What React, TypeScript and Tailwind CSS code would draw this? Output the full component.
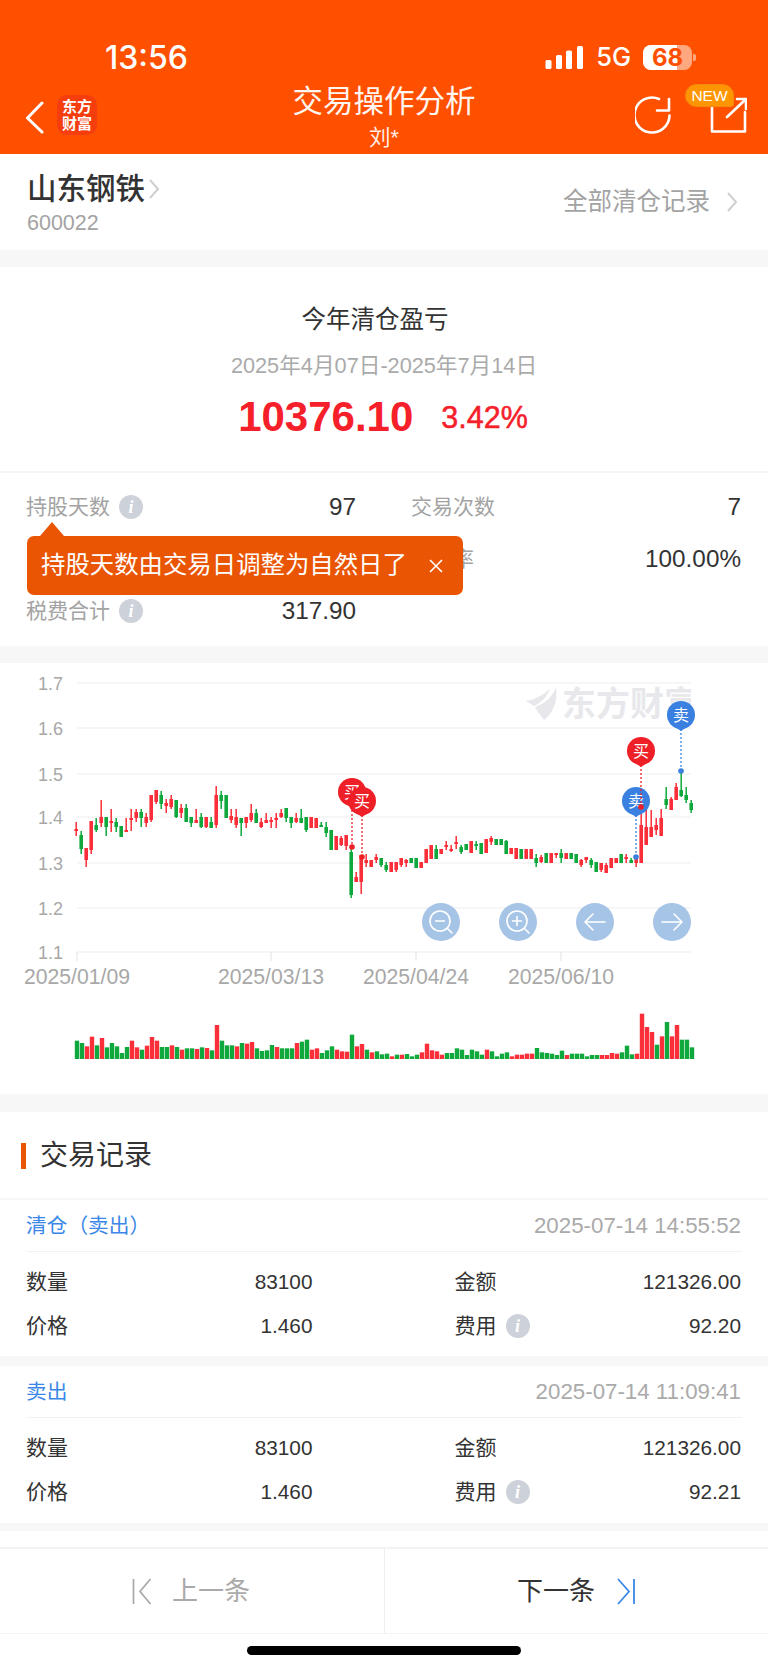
import type { ReactNode } from "react";

type Candle = [number, number, number, number, "r" | "g"];

// [high, low, body top, body bottom, colour], y in page pixels
const candles: Candle[] = [
  [822, 836, 829, 831, "r"], [831, 854, 835, 849, "g"], [848, 867, 848, 860, "r"], [821, 854, 821, 850, "r"],
  [818, 832, 825, 830, "g"], [800, 827, 817, 823, "r"], [817, 836, 817, 827, "g"], [809, 832, 821, 823, "r"],
  [818, 832, 822, 827, "g"], [826, 837, 826, 837, "g"], [818, 832, 830, 832, "r"], [809, 831, 818, 820, "r"],
  [809, 822, 812, 818, "r"], [809, 827, 812, 818, "g"], [813, 827, 817, 823, "r"], [795, 822, 795, 820, "r"],
  [790, 804, 790, 802, "r"], [791, 809, 795, 804, "g"], [799, 813, 803, 806, "r"], [795, 809, 799, 807, "r"],
  [800, 818, 800, 817, "g"], [804, 818, 808, 813, "r"], [804, 822, 808, 822, "g"], [817, 827, 817, 823, "g"],
  [809, 823, 820, 823, "r"], [813, 828, 817, 827, "g"], [817, 828, 817, 827, "r"], [817, 828, 822, 828, "g"],
  [786, 828, 795, 825, "r"], [791, 809, 795, 801, "g"], [795, 818, 795, 818, "g"], [809, 823, 816, 820, "r"],
  [809, 828, 817, 825, "r"], [818, 836, 818, 823, "g"], [817, 828, 817, 823, "r"], [804, 822, 813, 820, "r"],
  [809, 823, 813, 823, "g"], [818, 828, 822, 827, "r"], [813, 823, 820, 823, "r"], [817, 828, 820, 822, "r"],
  [813, 828, 818, 820, "r"], [809, 818, 813, 817, "r"], [808, 822, 808, 818, "g"], [817, 828, 817, 823, "g"],
  [813, 823, 818, 822, "r"], [809, 823, 818, 823, "g"], [817, 832, 817, 830, "g"], [817, 828, 817, 828, "r"],
  [818, 828, 818, 828, "r"], [822, 827, 825, 827, "g"], [822, 837, 827, 833, "g"], [830, 850, 830, 850, "g"],
  [836, 850, 836, 850, "r"], [836, 846, 838, 845, "r"], [835, 850, 835, 846, "r"], [847, 898, 852, 895, "g"],
  [872, 882, 877, 882, "r"], [855, 894, 855, 882, "r"], [854, 867, 860, 863, "r"], [860, 867, 860, 867, "r"],
  [854, 863, 857, 860, "r"], [858, 867, 858, 865, "g"], [862, 872, 865, 870, "g"], [862, 872, 862, 872, "r"],
  [862, 872, 862, 870, "r"], [858, 867, 858, 865, "r"], [859, 867, 860, 863, "r"], [858, 863, 858, 863, "g"],
  [858, 868, 858, 868, "g"], [862, 868, 862, 868, "r"], [849, 863, 849, 863, "r"], [845, 859, 845, 859, "r"],
  [845, 859, 849, 859, "g"], [849, 854, 849, 854, "r"], [841, 850, 845, 847, "r"], [845, 852, 849, 851, "r"],
  [836, 849, 842, 844, "r"], [845, 854, 847, 852, "g"], [844, 850, 844, 850, "g"], [841, 853, 841, 853, "r"],
  [841, 850, 844, 846, "g"], [843, 854, 843, 854, "g"], [839, 853, 839, 853, "r"], [836, 845, 838, 842, "r"],
  [839, 845, 839, 845, "g"], [839, 845, 839, 845, "g"], [840, 854, 841, 854, "g"], [848, 854, 848, 854, "r"],
  [848, 859, 848, 859, "r"], [849, 859, 849, 859, "g"], [849, 859, 849, 859, "r"], [849, 859, 849, 859, "r"],
  [854, 867, 858, 863, "g"], [855, 863, 857, 862, "r"], [853, 863, 853, 863, "g"], [853, 863, 853, 863, "r"],
  [853, 858, 853, 855, "r"], [849, 863, 853, 858, "g"], [853, 859, 853, 859, "r"], [853, 859, 853, 859, "g"],
  [854, 863, 854, 863, "g"], [859, 867, 860, 865, "r"], [857, 863, 857, 860, "r"], [858, 868, 860, 865, "g"],
  [862, 872, 862, 872, "g"], [863, 872, 863, 870, "r"], [863, 873, 865, 873, "r"], [858, 868, 858, 868, "r"],
  [858, 863, 858, 863, "r"], [854, 863, 854, 863, "g"], [854, 863, 857, 859, "r"], [858, 863, 860, 863, "g"],
  [858, 867, 858, 863, "r"], [805, 863, 825, 863, "r"], [809, 845, 827, 845, "r"], [810, 837, 827, 837, "r"],
  [818, 835, 825, 830, "r"], [809, 836, 818, 836, "r"], [787, 809, 799, 805, "g"], [797, 810, 799, 810, "r"],
  [783, 800, 787, 800, "r"], [770, 797, 790, 796, "g"], [787, 803, 795, 800, "g"], [800, 813, 803, 810, "g"],
];

// bar tops read at 3x, base is 1198 on that scale
const volumes: [number, "r" | "g"][] = [
  [1143, "g"], [1150, "g"], [1160, "r"], [1131, "r"], [1157, "g"], [1135, "r"], [1163, "g"], [1150, "g"], [1160, "g"], [1180, "g"],
  [1162, "g"], [1143, "r"], [1163, "r"], [1170, "g"], [1158, "r"], [1132, "r"], [1143, "r"], [1162, "g"], [1162, "g"], [1157, "r"],
  [1162, "g"], [1170, "r"], [1166, "g"], [1166, "g"], [1168, "r"], [1163, "g"], [1165, "r"], [1172, "g"], [1096, "r"], [1143, "g"],
  [1157, "g"], [1157, "g"], [1160, "r"], [1150, "g"], [1152, "r"], [1147, "r"], [1166, "g"], [1174, "g"], [1172, "g"], [1156, "g"],
  [1162, "r"], [1166, "g"], [1166, "g"], [1166, "g"], [1150, "r"], [1146, "g"], [1140, "g"], [1170, "r"], [1166, "r"], [1180, "g"],
  [1172, "g"], [1160, "g"], [1170, "r"], [1175, "r"], [1176, "r"], [1125, "g"], [1160, "r"], [1153, "r"], [1170, "g"], [1178, "r"],
  [1175, "g"], [1184, "g"], [1182, "g"], [1190, "r"], [1185, "g"], [1185, "r"], [1183, "g"], [1190, "g"], [1185, "g"], [1178, "r"],
  [1152, "r"], [1172, "r"], [1175, "r"], [1185, "r"], [1180, "g"], [1180, "g"], [1166, "g"], [1170, "g"], [1186, "g"], [1170, "g"],
  [1175, "g"], [1185, "g"], [1170, "r"], [1175, "g"], [1190, "g"], [1182, "g"], [1178, "g"], [1190, "r"], [1185, "r"], [1185, "r"],
  [1182, "r"], [1182, "r"], [1165, "g"], [1178, "g"], [1180, "g"], [1182, "g"], [1186, "g"], [1173, "g"], [1186, "r"], [1182, "g"],
  [1182, "g"], [1182, "g"], [1190, "g"], [1186, "g"], [1186, "g"], [1186, "r"], [1186, "r"], [1180, "r"], [1182, "r"], [1178, "g"],
  [1158, "g"], [1184, "g"], [1182, "r"], [1062, "r"], [1102, "r"], [1117, "r"], [1155, "g"], [1130, "r"], [1087, "g"], [1130, "r"],
  [1096, "r"], [1140, "g"], [1140, "g"], [1163, "g"],
];

const RED = "#fb2f39";
const GREEN = "#0fa83c";
const TOP = 663;

function Pin({ x, cy, dotY, label, color }: { x: number; cy: number; dotY: number; label: string; color: string }) {
  return (
    <g>
      <line x1={x} y1={cy + 14} x2={x} y2={dotY} stroke={color} strokeWidth="1.5" strokeDasharray="2 2" opacity="0.85" />
      <circle cx={x} cy={dotY} r="2.8" fill={color} />
      <circle cx={x} cy={cy} r="14" fill={color} />
      <path d={`M${x - 6} ${cy + 12} L${x} ${cy + 16} L${x + 6} ${cy + 12} Z`} fill={color} />
      <text x={x} y={cy + 6} textAnchor="middle" fontSize="16" fill="#fff">
        {label}
      </text>
    </g>
  );
}

function CircleButton({ cx, children }: { cx: number; children: ReactNode }) {
  return (
    <g transform={`translate(${cx} 922)`} fill="none" stroke="#fff" strokeWidth="1.6" strokeLinecap="round" strokeLinejoin="round">
      <circle r="19" fill="#a6c4e6" stroke="none" />
      {children}
    </g>
  );
}

function Chart() {
  const grid: [string, number][] = [
    ["1.7", 683], ["1.6", 728], ["1.5", 774], ["1.4", 817], ["1.3", 863], ["1.2", 908], ["1.1", 952],
  ];
  const dates: [string, number][] = [
    ["2025/01/09", 77], ["2025/03/13", 271], ["2025/04/24", 416], ["2025/06/10", 561],
  ];
  return (
    <svg width="768" height="431" viewBox={`0 ${TOP} 768 431`} className="block">
      <defs>
        <clipPath id="wm">
          <rect x="500" y="670" width="191" height="70" />
        </clipPath>
      </defs>
      {grid.map(([label, y]) => (
        <g key={label}>
          <line x1="77" x2="691" y1={y} y2={y} stroke="#f3f3f3" strokeWidth="1.5" />
          <text x="63" y={y + 6.5} textAnchor="end" fontSize="18" fill="#a8a8a8">
            {label}
          </text>
        </g>
      ))}
      {dates.map(([label, x]) => (
        <g key={label}>
          <line x1={x} x2={x} y1="952" y2="961" stroke="#e6e6e6" strokeWidth="1.2" />
          <text x={x} y="984" textAnchor="middle" fontSize="21.2" fill="#a8a8a8">
            {label}
          </text>
        </g>
      ))}

      {/* watermark */}
      <g clipPath="url(#wm)" fill="#e8e8ec">
        <path d="M556 687 C558 702 553 713 544 720 C541 716 537 711 535 707 C546 703 553 696 556 687 Z" />
        <path d="M550 688 C545 694 537 699 526 701 L534 706 C541 703 548 696 550 688 Z" />
        <text x="562" y="716" fontSize="34" fontWeight="700">
          东方财富
        </text>
      </g>

      {candles.map(([hi, lo, top, bot, c], i) => {
        const x = 76.2 + 5 * i;
        const fill = c === "r" ? RED : GREEN;
        return (
          <g key={i} fill={fill}>
            <rect x={x - 0.75} y={hi} width="1.5" height={lo - hi} />
            <rect x={x - 1.8} y={top} width="3.6" height={Math.max(bot - top, 1.5)} />
          </g>
        );
      })}

      {volumes.map(([t, c], i) => {
        const h = (1198 - t) / 3;
        return <rect key={i} x={74.8 + 5 * i} y={1059 - h} width="4.4" height={h} fill={c === "r" ? RED : GREEN} />;
      })}

      <CircleButton cx={441}>
        <circle cx="-1" cy="-1" r="10" />
        <path d="M-5.5 -1 H3.5 M6.5 6.5 L11 11" />
      </CircleButton>
      <CircleButton cx={518}>
        <circle cx="-1" cy="-1" r="10" />
        <path d="M-5.5 -1 H3.5 M-1 -5.5 V3.5 M6.5 6.5 L11 11" />
      </CircleButton>
      <CircleButton cx={595}>
        <path d="M10 0 H-10 M-2 -8 L-10 0 L-2 8" />
      </CircleButton>
      <CircleButton cx={672}>
        <path d="M-10 0 H10 M2 -8 L10 0 L2 8" />
      </CircleButton>

      <Pin x={352} cy={792} dotY={847} label="买" color="#ee1f26" />
      <Pin x={362} cy={801} dotY={857} label="买" color="#ee1f26" />
      <Pin x={636} cy={801} dotY={857} label="卖" color="#3a80e0" />
      <Pin x={641} cy={751} dotY={807} label="买" color="#ee1f26" />
      <Pin x={681} cy={715} dotY={771} label="卖" color="#3a80e0" />
    </svg>
  );
}

function InfoIcon() {
  return (
    <span className="flex h-6 w-6 shrink-0 items-center justify-center rounded-full bg-[#cdd1d9] font-['Liberation_Serif',serif] text-[18px] leading-none font-bold text-white italic">
      i
    </span>
  );
}

function Stat({ label, value, info }: { label: string; value: string; info?: boolean }) {
  return (
    <div className="flex h-[52px] items-center justify-between">
      <span className="flex items-center gap-[9px] text-[21px] text-[#a3a3a3]">
        {label}
        {info && <InfoIcon />}
      </span>
      <span className="text-[24.3px] text-[#333]">{value}</span>
    </div>
  );
}

function Field({ label, value, info }: { label: string; value: string; info?: boolean }) {
  return (
    <div className="flex h-11 items-center justify-between">
      <span className="flex items-center gap-[9px] text-[21px] text-[#333]">
        {label}
        {info && <InfoIcon />}
      </span>
      <span className="text-[20.8px] text-[#333]">{value}</span>
    </div>
  );
}

function TradeRecord({ type, time, fee, bottom }: { type: string; time: string; fee: string; bottom: string }) {
  return (
    <div className="bg-white">
      <div className="ml-[27px] mr-[26px] flex h-[52px] items-center justify-between border-b border-[#f2f2f2] pr-[1px]">
        <span className="-ml-[1px] text-[20.7px] text-[#3b87e8]">{type}</span>
        <span className="text-[22.3px] text-[#aaa]">{time}</span>
      </div>
      <div className={`grid grid-cols-2 gap-x-[142px] pt-[8px] pr-[27px] pl-[26px] ${bottom}`}>
        <Field label="数量" value="83100" />
        <Field label="金额" value="121326.00" />
        <Field label="价格" value="1.460" />
        <Field label="费用" value={fee} info />
      </div>
    </div>
  );
}

export default function App() {
  return (
    <div className="h-[1669px] w-[768px] overflow-hidden bg-white font-['Liberation_Sans','Noto_Sans_CJK_SC',sans-serif]">
      {/* header */}
      <header className="h-[154px] bg-[#ff5000] text-white">
        <div className="flex h-[80px] items-end pb-[5px]">
          <div className="flex h-[35px] w-full items-center">
            <span className="ml-[105px] font-['Inter',sans-serif] text-[32px] font-medium">13:56</span>
            <svg width="40" height="24" viewBox="0 0 40 24" className="ml-auto" fill="#fff">
              <rect x="0.5" y="14" width="6" height="9" rx="1.5" />
              <rect x="11" y="9" width="6" height="14" rx="1.5" />
              <rect x="21" y="4.5" width="6" height="18.5" rx="1.5" />
              <rect x="32" y="0" width="6" height="23" rx="1.5" />
            </svg>
            <span className="ml-[11px] font-['Inter',sans-serif] text-[25.5px] font-medium">5G</span>
            <div className="relative ml-[12px] flex h-[25px] w-[49px] items-center justify-center rounded-[8px] bg-white/50">
              <div className="absolute inset-y-0 left-0 w-[34px] rounded-l-[8px] bg-white" />
              <span className="relative font-['Inter',sans-serif] text-[24px] leading-none font-bold text-[#ff5000]">68</span>
            </div>
            <div className="mr-[72px] ml-[1px] h-[7px] w-[3px] rounded-r-[2px] bg-white/50" />
          </div>
        </div>
        <div className="relative flex h-[74px]">
          <svg width="24" height="34" viewBox="0 0 24 34" className="ml-[24px] mt-[21px]" fill="none" stroke="#fff" strokeWidth="3" strokeLinecap="round" strokeLinejoin="round">
            <path d="M18 2 L3.5 17 L18 31" />
          </svg>
          <div className="ml-[9px] mt-[15px] flex h-10 w-10 flex-col items-center justify-center rounded-[10px] bg-[#f53d0e] text-[15px] leading-[17px] font-bold">
            <span>东方</span>
            <span>财富</span>
          </div>
          <div className="absolute inset-x-0 top-0 flex flex-col items-center">
            <span className="mt-[3px] text-[30.5px] leading-[36px] opacity-95">交易操作分析</span>
            <span className="mt-[5px] text-[21.5px] leading-[28px] opacity-90">刘*</span>
          </div>
          <svg width="40" height="42" viewBox="0 0 40 42" className="ml-auto mt-[15px]" fill="none" stroke="#fff" strokeWidth="2.6" strokeLinecap="round" strokeLinejoin="round">
            <path d="M24 4 A17.5 17.5 0 1 0 34.5 20.5" />
            <path d="M22 15.5 H34 V4" />
          </svg>
          <svg width="38" height="38" viewBox="0 0 38 38" className="ml-[34px] mr-[21px] mt-[17px]" fill="none" stroke="#fff" strokeWidth="2.6" strokeLinecap="round" strokeLinejoin="round">
            <path d="M3 8 V34.5 H36 V15" />
            <path d="M28 2 H37 V12 M18 20 L36 3" />
          </svg>
          <span className="absolute top-[4px] left-[685px] flex h-[23px] w-[49px] items-center justify-center rounded-t-[12px] rounded-br-[3px] rounded-bl-[12px] border border-[#f48a12] bg-[#ff9500] text-[15.5px] leading-none text-white">
            NEW
          </span>
        </div>
      </header>

      {/* stock */}
      <section className="flex h-[96px] items-start justify-between pr-[30px] pl-[27px]">
        <div>
          <div className="mt-[18px] flex h-[34px] items-center">
            <span className="text-[29.5px] leading-none font-medium text-[#333]">山东钢铁</span>
            <svg width="12" height="20" viewBox="0 0 12 20" className="ml-[3px]" fill="none" stroke="#cfcfcf" strokeWidth="2">
              <path d="M2 1 L10 10 L2 19" />
            </svg>
          </div>
          <div className="mt-[4px] text-[21.5px] leading-[26px] text-[#a3a3a3]">600022</div>
        </div>
        <div className="mt-[33px] flex h-[30px] items-center">
          <span className="text-[24.5px] text-[#a3a3a3]">全部清仓记录</span>
          <svg width="12" height="20" viewBox="0 0 12 20" className="ml-[16px]" fill="none" stroke="#cfcfcf" strokeWidth="2">
            <path d="M2 1 L10 10 L2 19" />
          </svg>
        </div>
      </section>
      <div className="h-[17px] bg-[#f7f7f7]" />

      {/* summary */}
      <section className="flex h-[204px] flex-col items-center">
        <div className="mt-[38px] mr-[18px] text-[24.5px] leading-[30px] text-[#333]">今年清仓盈亏</div>
        <div className="mt-[17px] text-[21.7px] leading-[28px] text-[#aaa]">2025年4月07日-2025年7月14日</div>
        <div className="mt-[12px] mr-[2px] flex h-[50px] items-center gap-[28px] font-bold text-[#f6202a]">
          <span className="text-[42px] leading-none">10376.10</span>
          <span className="text-[30.5px] leading-none font-normal [-webkit-text-stroke:0.5px_#f6202a]">3.42%</span>
        </div>
      </section>

      {/* stats */}
      <section className="relative border-t-2 border-[#f6f6f6] pt-[8px] pb-[9px]">
        <div className="grid grid-cols-2 gap-x-[55px] pr-[27px] pl-[26px]">
          <Stat label="持股天数" value="97" info />
          <Stat label="交易次数" value="7" />
          <div className="h-[52px]" />
          <Stat label="成功率" value="100.00%" />
          <Stat label="税费合计" value="317.90" info />
        </div>
        <div className="absolute top-[63px] left-[27px] flex h-[59px] w-[436px] items-center justify-between rounded-[7px] bg-[#ea5504] pr-[20px] pl-[14px] text-[24.4px] text-white">
          <span className="absolute -top-[14px] left-[13px] h-0 w-0 border-x-[12px] border-b-[14px] border-x-transparent border-b-[#ea5504]" />
          持股天数由交易日调整为自然日了
          <svg width="14" height="14" viewBox="0 0 14 14" fill="none" stroke="#fff" strokeWidth="1.6">
            <path d="M1 1 L13 13 M13 1 L1 13" />
          </svg>
        </div>
      </section>
      <div className="h-[17px] bg-[#f7f7f7]" />

      <Chart />
      <div className="h-[18px] bg-[#f7f7f7]" />

      {/* records */}
      <section className="flex h-[86px] items-center pt-[1px]">
        <span className="ml-[21px] h-[26px] w-[5px] bg-[#ea5504]" />
        <span className="ml-[14px] text-[28px] text-[#333]">交易记录</span>
      </section>
      <div className="h-[2px] bg-[#f6f6f6]" />
      <TradeRecord type="清仓（卖出）" time="2025-07-14 14:55:52" fee="92.20" bottom="pb-[8px]" />
      <div className="h-[10px] bg-[#f7f7f7]" />
      <TradeRecord type="卖出" time="2025-07-14 11:09:41" fee="92.21" bottom="pb-[9px]" />
      <div className="h-[8px] bg-[#f7f7f7]" />
      <div className="h-[16px]" />

      {/* prev / next */}
      <nav className="flex h-[87px] border-t-2 border-b border-[#f3f3f3]">
        <div className="flex w-[385px] items-center justify-center gap-[20px] border-r border-[#eee] pr-[2px]">
          <svg width="20" height="27" viewBox="0 0 20 27" fill="none" stroke="#a8a8a8" strokeWidth="1.7">
            <path d="M1.5 1 V26 M18.5 1 L8 13.5 L18.5 26" />
          </svg>
          <span className="text-[26px] text-[#aaa]">上一条</span>
        </div>
        <div className="flex flex-1 items-center justify-center gap-[22px]">
          <span className="text-[26px] text-[#333]">下一条</span>
          <svg width="19" height="27" viewBox="0 0 19 27" fill="none" stroke="#3b87e8" strokeWidth="1.8">
            <path d="M1 1 L12 13.5 L1 26 M17 1 V26" />
          </svg>
        </div>
      </nav>

      <div className="flex justify-center pt-[12px]">
        <div className="h-[9px] w-[274px] rounded-full bg-black" />
      </div>
    </div>
  );
}
